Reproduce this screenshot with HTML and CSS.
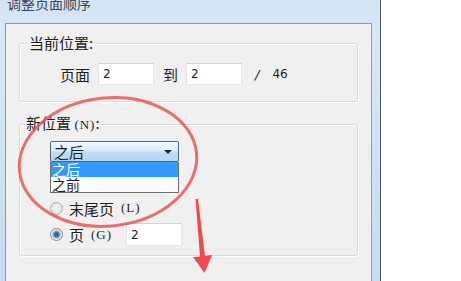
FILE: index.html
```html
<!DOCTYPE html>
<html lang="zh-CN">
<head>
<meta charset="utf-8">
<title>调整页面顺序</title>
<link rel="stylesheet" href="styles.css">
</head>
<body>
<div class="screen">
  <div class="window">
    <div class="title">调整页面顺序</div>
    <div class="client">
      <fieldset class="group group-current">
        <legend>当前位置:</legend>
        <div class="row">
          <span class="lbl">页面</span>
          <span class="input">2</span>
          <span class="lbl to">到</span>
          <span class="input">2</span>
          <span class="slash">/</span>
          <span class="total">46</span>
        </div>
      </fieldset>
      <fieldset class="group group-new">
        <legend>新位置 <span class="key">(N)</span>:</legend>
        <div class="inner">
          <div class="combo-wrap">
            <div class="combo">
              <span>之后</span>
              <span class="caret"></span>
            </div>
            <ul class="list">
              <li class="sel">之后</li>
              <li>之前</li>
            </ul>
          </div>
          <div class="radio-row first">
            <span class="radio"></span>
            <span class="rtext">末尾页</span><span class="key rkey">(L)</span>
          </div>
          <div class="radio-row second">
            <span class="radio checked"></span>
            <span class="rtext">页</span><span class="key rkey">(G)</span>
            <span class="input small">2</span>
          </div>
        </div>
      </fieldset>
    </div>
  </div>
  <div class="outside"></div>
  <svg class="annot" width="461" height="281" viewBox="0 0 461 281">
    <ellipse cx="108" cy="162" rx="89" ry="64" transform="rotate(-6 108 162)" fill="none" stroke="#e4585c" stroke-width="3" opacity="0.85"/>
    <path d="M195.5 199 L198 199 L205 256 L212 255 L204.5 273 L193 257 L200 256.5 Z" fill="#f04a4c"/>
  </svg>
</div>
</body>
</html>
```
FILE: styles.css
```css
html, body {
  margin: 0;
  padding: 0;
}
body {
  width: 461px;
  height: 281px;
  overflow: hidden;
  background: #ffffff;
  font-family: "Noto Sans CJK SC", "DejaVu Sans", sans-serif;
  color: #1e1e1e;
}
.screen {
  position: relative;
  display: flex;
  width: 461px;
  height: 281px;
}
.window {
  width: 381px;
  height: 281px;
  box-sizing: border-box;
  padding: 0 8px 0 5px;
  background: linear-gradient(to bottom, #d2e3f5 0px, #d9e8f7 30px, #c6dcf1 281px);
  border-right: 1px solid #4a5868;
  display: flex;
  flex-direction: column;
}
.title {
  flex: none;
  height: 27px;
  box-sizing: border-box;
  font-size: 14px;
  line-height: 14px;
  margin-top: -4px;
  padding-left: 2px;
  color: #3c4656;
}
.client {
  flex: 1;
  background: #f0f0f0;
  border: 1px solid #8c9bab;
  border-bottom: none;
  padding-top: 11px;
}
.group {
  margin: 0 13px 0 13px;
  border: 1px solid #d5dbe1;
  border-radius: 3px;
  box-shadow: inset 1px 1px 0 #ffffff, 1px 1px 0 #ffffff;
  padding: 0;
  min-width: 0;
}
.group legend {
  font-size: 15px;
  line-height: 16px;
  padding: 0 1px;
  margin-left: 8px;
  color: #1e1e1e;
}
.group-new legend {
  margin-left: 5px;
}
.key {
  font-family: "Liberation Serif", "Noto Sans CJK SC", serif;
  font-size: 13px;
  letter-spacing: 1px;
}
.group-current {
  padding: 12px 0 16px 0;
}
.row {
  display: flex;
  align-items: center;
  height: 22px;
  margin-left: 40px;
}
.lbl {
  font-size: 15px;
}
.input {
  display: flex;
  align-items: center;
  box-sizing: border-box;
  width: 56px;
  height: 22px;
  margin-left: 8px;
  padding-left: 4px;
  background: #ffffff;
  border: 1px solid #e3e7eb;
  border-top-color: #cdd1d6;
  font-family: "DejaVu Sans", sans-serif;
  font-size: 12px;
  color: #222;
}
.to {
  margin-left: 9px;
}
.slash {
  margin-left: 13px;
  font-family: "DejaVu Sans", sans-serif;
  font-size: 13px;
  font-style: italic;
}
.total {
  margin-left: 13px;
  font-family: "DejaVu Sans", sans-serif;
  font-size: 12px;
}
.group-new {
  margin-top: 13px;
  padding: 8px 0 9px 0;
}
.inner {
  margin-left: 30px;
}
.combo-wrap {
  position: relative;
  width: 129px;
}
.combo {
  box-sizing: border-box;
  width: 129px;
  height: 21px;
  border: 1px solid #50667b;
  border-radius: 2px;
  background: linear-gradient(to bottom, #f1f8fd 0%, #dcedf9 45%, #c0def4 55%, #b3d6f2 100%);
  display: flex;
  align-items: center;
  justify-content: space-between;
  padding: 0 6px 0 3px;
  font-size: 15px;
  line-height: 19px;
  color: #1e1e1e;
}
.caret {
  width: 0;
  height: 0;
  border-left: 4px solid transparent;
  border-right: 4px solid transparent;
  border-top: 4px solid #1e2a36;
}
.list {
  position: absolute;
  left: 0;
  top: 21px;
  width: 129px;
  box-sizing: border-box;
  margin: 0;
  padding: 0;
  list-style: none;
  background: #ffffff;
  border: 1px solid #6d6d6d;
  border-top: none;
}
.list li {
  height: 15px;
  line-height: 15px;
  font-size: 14px;
  padding-left: 1px;
  color: #1e1e1e;
}
.list li.sel {
  background: #3399ff;
  color: #ffffff;
}
.radio-row {
  display: flex;
  align-items: center;
  height: 22px;
}
.radio-row.first {
  margin-top: 35px;
}
.radio-row.second {
  margin-top: 4px;
  height: 23px;
}
.radio {
  box-sizing: border-box;
  width: 13px;
  height: 13px;
  border-radius: 50%;
  border: 1px solid #a6adb5;
  background: radial-gradient(circle at 50% 40%, #f4f4f4 0%, #dcdcdc 100%);
}
.radio.checked {
  border-color: #7d8a96;
  background: radial-gradient(circle, #2c5d89 0px, #3f78a8 2.5px, #9fb8cc 3.5px, #e8eef3 5px);
}
.rtext {
  margin-left: 6px;
  font-size: 15px;
}
.rkey {
  margin-left: 7px;
}
.input.small {
  margin-left: 14px;
  height: 23px;
}
.outside {
  flex: 1;
  background: #ffffff;
}
.annot {
  position: absolute;
  left: 0;
  top: 0;
  pointer-events: none;
}
```
